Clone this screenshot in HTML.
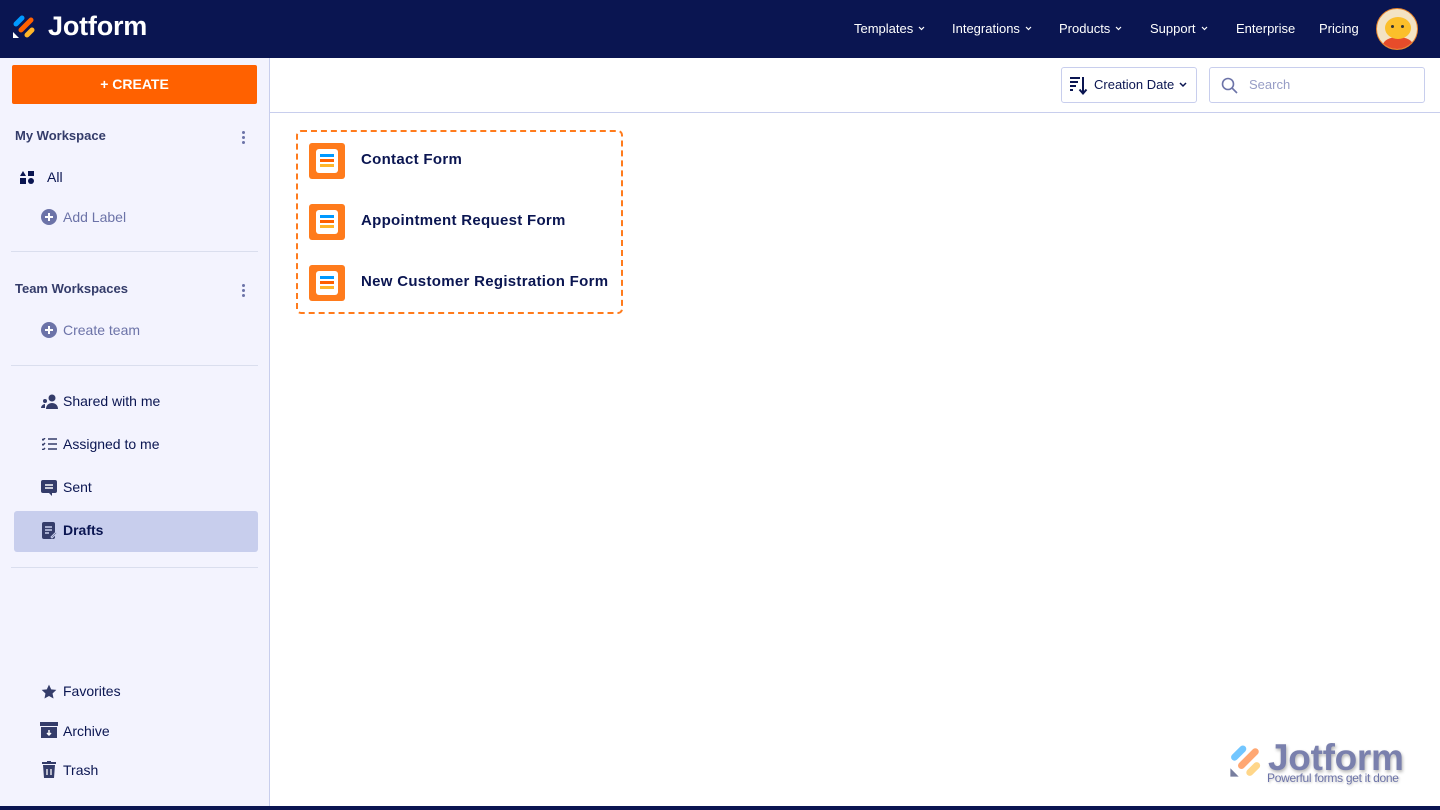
<!DOCTYPE html>
<html><head><meta charset="utf-8"><style>
*{box-sizing:border-box;margin:0;padding:0}
body{width:1440px;height:810px;overflow:hidden;font-family:"Liberation Sans",sans-serif;background:#fff;position:relative;color:#0a1551}
.top{position:absolute;left:0;top:0;width:1440px;height:58px;background:#0a1551}
.nav{position:absolute;top:21px;color:#fff;font-size:13px;white-space:nowrap}
.nav svg{margin-left:5px;vertical-align:2px}
.side{position:absolute;left:0;top:58px;width:270px;height:748px;background:#f3f3fe;border-right:1px solid #c8ceed}
.abs{position:absolute}
.item{position:absolute;left:63px;font-size:14px;color:#0a1551}
.muted{color:#6c73a8}
.hdr{position:absolute;left:15px;font-size:13px;font-weight:bold;color:#343c6a}
.hr{position:absolute;left:11px;width:247px;height:1px;background:#dadeee}
.dots{position:absolute;left:242px;width:3px}
.dots i{display:block;width:3px;height:3px;border-radius:50%;background:#6c73a8;margin-bottom:2px}
.form{position:absolute;left:309px}
.ficon{position:absolute;left:0;top:0;width:36px;height:36px;background:#ff7b1c;border-radius:3px}
.ficon b{position:absolute;left:7px;top:6px;width:22px;height:24px;background:#fff;border-radius:3px}
.ficon i{position:absolute;left:11px;width:14px;height:3px}
.ftxt{position:absolute;left:52px;top:8px;font-size:15px;font-weight:bold;white-space:nowrap;color:#0a1551;letter-spacing:.3px}
</style></head><body>
<div class="top">
 <svg class="abs" style="left:13px;top:13px" width="24" height="26" viewBox="0 0 24 26">
  <path d="M3 11 L9 5" stroke="#0099ff" stroke-width="5" stroke-linecap="round"/>
  <path d="M8 17 L18 7" stroke="#ff6100" stroke-width="5" stroke-linecap="round"/>
  <path d="M14 22 L19 17" stroke="#ffb629" stroke-width="5" stroke-linecap="round"/>
  <path d="M0 19 L0 25 L6 25 Z" fill="#fff"/>
 </svg>
 <div class="abs" style="left:48px;top:11px;color:#fff;font-size:27px;font-weight:bold;letter-spacing:-.2px">Jotform</div>
 <div class="nav" style="left:854px">Templates<svg width="7" height="5"><path d="M1 1l2.5 2.5L6 1" stroke="#fff" fill="none" stroke-width="1.2"/></svg></div>
 <div class="nav" style="left:952px">Integrations<svg width="7" height="5"><path d="M1 1l2.5 2.5L6 1" stroke="#fff" fill="none" stroke-width="1.2"/></svg></div>
 <div class="nav" style="left:1059px">Products<svg width="7" height="5"><path d="M1 1l2.5 2.5L6 1" stroke="#fff" fill="none" stroke-width="1.2"/></svg></div>
 <div class="nav" style="left:1150px">Support<svg width="7" height="5"><path d="M1 1l2.5 2.5L6 1" stroke="#fff" fill="none" stroke-width="1.2"/></svg></div>
 <div class="nav" style="left:1236px">Enterprise</div>
 <div class="nav" style="left:1319px">Pricing</div>
 <div class="abs" style="left:1376px;top:8px;width:42px;height:42px;border-radius:50%;background:#f3e3c3;overflow:hidden;border:1px solid #e8842a">
  <div class="abs" style="left:6px;top:28px;width:30px;height:16px;background:#e74c2a;border-radius:50% 50% 0 0"></div>
  <div class="abs" style="left:8px;top:8px;width:26px;height:22px;background:#fbbf2a;border-radius:50%"></div>
  <div class="abs" style="left:14px;top:16px;width:3px;height:3px;background:#333;border-radius:50%"></div>
  <div class="abs" style="left:24px;top:16px;width:3px;height:3px;background:#333;border-radius:50%"></div>
 </div>
</div>
<div class="side">
 <div class="abs" style="left:12px;top:7px;width:245px;height:39px;background:#ff6100;border-radius:2px;color:#fff;font-weight:bold;font-size:14px;text-align:center;line-height:39px">+ CREATE</div>
 <div class="hdr" style="top:70px">My Workspace</div>
 <div class="dots" style="top:73px"><i></i><i></i><i></i></div>
 <svg class="abs" style="left:20px;top:113px" width="14" height="13" viewBox="0 0 14 13"><path d="M3 0L6 5H0Z" fill="#0a1551"/><rect x="8" y="0" width="6" height="5" fill="#0a1551"/><rect x="0" y="7" width="6" height="6" fill="#0a1551"/><circle cx="11" cy="10" r="3" fill="#0a1551"/></svg>
 <div class="item" style="left:47px;top:111px">All</div>
 <svg class="abs" style="left:41px;top:151px" width="16" height="16"><circle cx="8" cy="8" r="8" fill="#6c73a8"/><path d="M8 4v8M4 8h8" stroke="#fff" stroke-width="2"/></svg>
 <div class="item muted" style="top:151px">Add Label</div>
 <div class="hr" style="top:193px"></div>
 <div class="hdr" style="top:223px">Team Workspaces</div>
 <div class="dots" style="top:226px"><i></i><i></i><i></i></div>
 <svg class="abs" style="left:41px;top:264px" width="16" height="16"><circle cx="8" cy="8" r="8" fill="#6c73a8"/><path d="M8 4v8M4 8h8" stroke="#fff" stroke-width="2"/></svg>
 <div class="item muted" style="top:264px">Create team</div>
 <div class="hr" style="top:307px"></div>
 <svg class="abs" style="left:41px;top:336px" width="17" height="15" viewBox="0 0 17 15"><circle cx="11" cy="4" r="3.5" fill="#343c6a"/><path d="M5 15c0-4 3-6 6-6s6 2 6 6z" fill="#343c6a"/><circle cx="4" cy="7" r="2" fill="#343c6a"/><path d="M0 14c0-2 2-4 4-4l0 4z" fill="#343c6a"/></svg>
 <div class="item" style="top:335px">Shared with me</div>
 <svg class="abs" style="left:42px;top:380px" width="15" height="12" viewBox="0 0 15 12"><path d="M6 1h9M6 6h9M6 11h9M0 1l1 1 2-2M0 6l1 1 2-2M0 11l1 1 2-2" stroke="#343c6a" stroke-width="1.5" fill="none"/></svg>
 <div class="item" style="top:378px">Assigned to me</div>
 <svg class="abs" style="left:41px;top:422px" width="16" height="16" viewBox="0 0 16 16"><path d="M2 0h12a2 2 0 0 1 2 2v9a2 2 0 0 1-2 2H11v3l-3-3H2a2 2 0 0 1-2-2V2a2 2 0 0 1 2-2z" fill="#343c6a"/><path d="M4 5h8M4 8h8" stroke="#fff" stroke-width="1.5"/></svg>
 <div class="item" style="top:421px">Sent</div>
 <div class="abs" style="left:14px;top:453px;width:244px;height:41px;background:#c8ceed;border-radius:3px"></div>
 <svg class="abs" style="left:42px;top:464px" width="15" height="17" viewBox="0 0 15 17"><rect width="13" height="17" rx="2" fill="#343c6a"/><path d="M3 5h7M3 8h7M3 11h4" stroke="#c8ceed" stroke-width="1.5"/><path d="M9 15l5-5 1 1-5 5z" fill="#343c6a" stroke="#c8ceed"/></svg>
 <div class="item" style="top:464px;font-weight:bold">Drafts</div>
 <div class="hr" style="top:509px"></div>
 <svg class="abs" style="left:41px;top:626px" width="16" height="16" viewBox="0 0 24 24"><path d="M12 1l3.3 7 7.7.9-5.7 5.3 1.5 7.6L12 18l-6.8 3.8 1.5-7.6L1 8.9 8.7 8z" fill="#343c6a"/></svg>
 <div class="item" style="top:625px">Favorites</div>
 <svg class="abs" style="left:40px;top:664px" width="18" height="16" viewBox="0 0 18 16"><rect width="18" height="4" fill="#343c6a"/><rect x="1" y="5" width="16" height="11" fill="#343c6a"/><path d="M9 8v5M7 11l2 2 2-2" stroke="#fff" stroke-width="1.5" fill="none"/></svg>
 <div class="item" style="top:665px">Archive</div>
 <svg class="abs" style="left:42px;top:703px" width="14" height="17" viewBox="0 0 14 17"><rect x="0" y="1" width="14" height="2" fill="#343c6a"/><rect x="5" y="0" width="4" height="2" fill="#343c6a"/><path d="M1 4h12l-1 13H2z" fill="#343c6a"/><path d="M5 8v6M9 8v6" stroke="#fff" stroke-width="1.3"/></svg>
 <div class="item" style="top:704px">Trash</div>
</div>
<div class="abs" style="left:270px;top:112px;width:1170px;height:1px;background:#c8ceed"></div>
<div class="abs" style="left:1061px;top:67px;width:136px;height:36px;border:1px solid #c8ceed;border-radius:3px"></div>
<svg class="abs" style="left:1070px;top:76px" width="18" height="19" viewBox="0 0 18 19"><path d="M0 2h10M0 6h8M0 10h6M0 14h3" stroke="#0a1551" stroke-width="2"/><path d="M13 1v16M9.5 13.5l3.5 4 3.5-4" stroke="#0a1551" stroke-width="2" fill="none"/></svg>
<div class="abs" style="left:1094px;top:77px;font-size:13px;color:#0a1551;white-space:nowrap">Creation Date<svg style="margin-left:5px;vertical-align:1px" width="8" height="6"><path d="M1 1l3 3 3-3" stroke="#0a1551" fill="none" stroke-width="1.5"/></svg></div>
<div class="abs" style="left:1209px;top:67px;width:216px;height:36px;border:1px solid #c8ceed;border-radius:3px"></div>
<svg class="abs" style="left:1221px;top:77px" width="17" height="17"><circle cx="7" cy="7" r="5.5" stroke="#6c73a8" stroke-width="1.6" fill="none"/><path d="M11 11l5 5" stroke="#6c73a8" stroke-width="1.6"/></svg>
<div class="abs" style="left:1249px;top:77px;font-size:13px;color:#979dc6">Search</div>
<div class="abs" style="left:296px;top:130px;width:327px;height:184px;border:2px dashed #ff7b1c;border-radius:5px"></div>
<div class="form" style="top:143px"><div class="ficon"><b></b><i style="top:11px;background:#09f"></i><i style="top:16px;background:#ff6100"></i><i style="top:21px;background:#ffb629"></i></div><div class="ftxt">Contact Form</div></div>
<div class="form" style="top:204px"><div class="ficon"><b></b><i style="top:11px;background:#09f"></i><i style="top:16px;background:#ff6100"></i><i style="top:21px;background:#ffb629"></i></div><div class="ftxt">Appointment Request Form</div></div>
<div class="form" style="top:265px"><div class="ficon"><b></b><i style="top:11px;background:#09f"></i><i style="top:16px;background:#ff6100"></i><i style="top:21px;background:#ffb629"></i></div><div class="ftxt">New Customer Registration Form</div></div>
<svg class="abs" style="left:1230px;top:742px" width="34" height="36" viewBox="0 0 24 26" opacity=".55">
  <path d="M3 11 L9 5" stroke="#0099ff" stroke-width="5" stroke-linecap="round"/>
  <path d="M8 17 L18 7" stroke="#ff6100" stroke-width="5" stroke-linecap="round"/>
  <path d="M14 22 L19 17" stroke="#ffb629" stroke-width="5" stroke-linecap="round"/>
  <path d="M0 19 L0 25 L6 25 Z" fill="#0a1551"/>
</svg>
<div class="abs" style="left:1268px;top:737px;font-size:37px;font-weight:bold;color:#7a80ad;letter-spacing:-.3px;text-shadow:1px 2px 3px rgba(0,0,0,.3)">Jotform</div>
<div class="abs" style="left:1267px;top:771px;font-size:12px;color:#6c73a8;letter-spacing:-.3px;text-shadow:1px 1px 2px rgba(0,0,0,.25)">Powerful forms get it done</div>
<div class="abs" style="left:0;top:806px;width:1440px;height:4px;background:#0a1551"></div>
</body></html>
